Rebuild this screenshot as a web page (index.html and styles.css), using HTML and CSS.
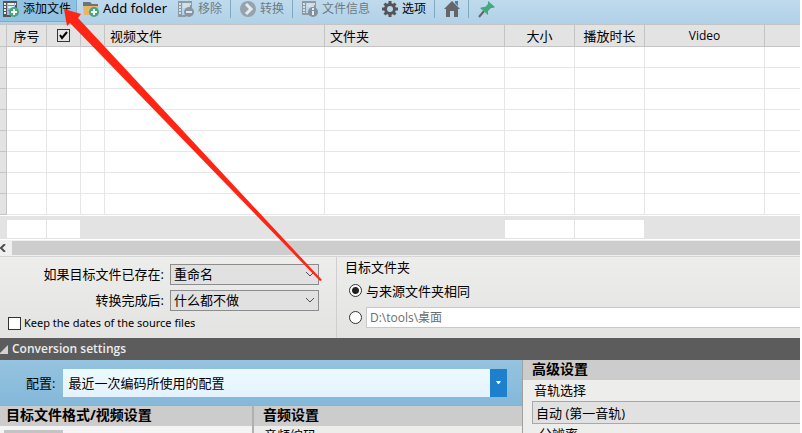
FILE: index.html
```html
<!DOCTYPE html>
<html lang="zh-CN">
<head>
    <meta charset="UTF-8">
    <meta name="viewport" content="width=device-width, initial-scale=1.0">
    <title>Video Converter</title>
    <link rel="stylesheet" href="styles.css">
</head>
<body>
    <div class="toolbar">
        <button class="tool active">
            <svg width="16" height="18" viewBox="0 0 16 18">
                <path fill="#555" d="M0 1h14v8h-2V3H4v12h4v2H0z"/>
                <path fill="#e6eef2" d="M1 3h2v2H1zM1 6h2v2H1zM1 9h2v2H1zM1 12h2v2H1zM12 3h1v2h-1zM5 3h6v5H5z"/>
                <path stroke="#7d8990" d="M5 5.500h6M5 10.500h3"/>
                <circle cx="11" cy="12" r="5" fill="#46a67c"/>
                <path stroke="#fff" stroke-width="2" d="M11 9v6M8 12h6"/>
            </svg>
            <span>添加文件</span>
        </button>
        <button class="tool folder">
            <svg width="16" height="18" viewBox="0 0 16 18">
                <path fill="#707478" d="M0 2h7l2 2h6v2H0z"/>
                <path fill="#e8b467" d="M0 6h15v9H1z"/>
                <circle cx="11" cy="12" r="5" fill="#46a67c"/>
                <path stroke="#fff" stroke-width="2" d="M11 9v6M8 12h6"/>
            </svg>
            <span class="latin">Add folder</span>
        </button>
        <button class="tool remove" disabled>
            <svg width="16" height="18" viewBox="0 0 16 18">
                <path fill="#8f9ba3" d="M0 1h14v8h-2V3H4v12h4v2H0z"/>
                <path fill="#d3e0e8" d="M1 3h2v2H1zM1 6h2v2H1zM1 9h2v2H1zM1 12h2v2H1zM12 3h1v2h-1zM5 3h6v5H5z"/>
                <circle cx="11" cy="12" r="5" fill="#8796a0"/>
                <path stroke="#dce6ec" stroke-width="2" d="M8 12h6"/>
            </svg>
            <span>移除</span>
        </button>
        <button class="tool split convert" disabled>
            <svg width="16" height="18" viewBox="0 0 16 18">
                <circle cx="8" cy="9" r="8" fill="#96a3ac"/>
                <path fill="none" stroke="#e3ebf0" stroke-width="3" d="M6 4l5 5-5 5"/>
            </svg>
            <span>转换</span>
        </button>
        <button class="tool split info" disabled>
            <svg width="16" height="18" viewBox="0 0 16 18">
                <path fill="#8f9ba3" d="M0 1h14v7h-2V3H4v10h3v2H0z"/>
                <path fill="#d3e0e8" d="M1 3h2v2H1zM1 6h2v2H1zM1 9h2v2H1zM1 12h2v1H1zM12 3h1v2h-1zM5 3h6v4H5z"/>
                <circle cx="11" cy="12" r="5" fill="#84919a"/>
                <path stroke="#e6eef2" stroke-width="2" d="M11 8v2M11 11v4"/>
            </svg>
            <span>文件信息</span>
        </button>
        <button class="tool options">
            <svg width="16" height="18" viewBox="0 0 16 18">
                <path stroke="#555" stroke-width="3" d="M8 1v16M0 9h16M2.500 3.500l11 11M13.500 3.500l-11 11"/>
                <circle cx="8" cy="9" r="6" fill="#555"/>
                <circle cx="8" cy="9" r="3" fill="#b8d5e9"/>
            </svg>
            <span>选项</span>
        </button>
        <button class="tool split home" aria-label="Home">
            <svg width="16" height="18" viewBox="0 0 16 18">
                <path fill="#3b83bd" d="M11 1h3v5l-3-3z"/>
                <path fill="#666" d="M8 1l8 8h-2v8h-4v-6H6v6H2V9H0z"/>
            </svg>
        </button>
        <button class="tool split pin" aria-label="Pin">
            <svg width="17" height="18" viewBox="0 0 17 18">
                <path stroke="#666" stroke-width="2" d="M6 11l-5 6"/>
                <path fill="#46a880" d="M10 1l7 6-2 1h-2l-3 3v4L2 8l3-1 2 0 3-3z"/>
            </svg>
        </button>
    </div>

    <table class="files">
        <colgroup>
            <col class="col-gutter"><col class="col-no"><col class="col-check"><col class="col-icon"><col class="col-file"><col class="col-folder"><col class="col-size"><col class="col-time"><col class="col-video"><col>
        </colgroup>
        <thead>
            <tr>
                <th></th>
                <th>序号</th>
                <th><input type="checkbox" class="check" aria-label="全选" checked></th>
                <th></th>
                <th class="left">视频文件</th>
                <th class="left">文件夹</th>
                <th>大小</th>
                <th>播放时长</th>
                <th class="latin">Video</th>
                <th></th>
            </tr>
        </thead>
        <tbody>
            <tr><td></td><td></td><td></td><td></td><td></td><td></td><td></td><td></td><td></td><td></td></tr>
            <tr><td></td><td></td><td></td><td></td><td></td><td></td><td></td><td></td><td></td><td></td></tr>
            <tr><td></td><td></td><td></td><td></td><td></td><td></td><td></td><td></td><td></td><td></td></tr>
            <tr><td></td><td></td><td></td><td></td><td></td><td></td><td></td><td></td><td></td><td></td></tr>
            <tr><td></td><td></td><td></td><td></td><td></td><td></td><td></td><td></td><td></td><td></td></tr>
            <tr><td></td><td></td><td></td><td></td><td></td><td></td><td></td><td></td><td></td><td></td></tr>
            <tr><td></td><td></td><td></td><td></td><td></td><td></td><td></td><td></td><td></td><td></td></tr>
            <tr><td></td><td></td><td></td><td></td><td></td><td></td><td></td><td></td><td></td><td></td></tr>
        </tbody>
        <tfoot>
            <tr class="spacer"><td colspan="10"></td></tr>
            <tr class="totals"><td></td><td class="cell"></td><td class="cell"></td><td colspan="3"></td><td class="cell"></td><td class="cell"></td><td colspan="2"></td></tr>
        </tfoot>
    </table>
    <div class="scrollbar">
        <button class="scroll-left" aria-label="Scroll left">
            <svg width="6" height="8" viewBox="0 0 6 8"><path fill="none" stroke="#505050" stroke-width="2" d="M5 0L1 4l4 4"/></svg>
        </button>
        <div class="thumb"></div>
    </div>

    <div class="output">
        <div class="rules">
            <div class="rule">
                <label for="exists">如果目标文件已存在:</label>
                <select id="exists"><option>重命名</option></select>
            </div>
            <div class="rule">
                <label for="after">转换完成后:</label>
                <select id="after"><option>什么都不做</option></select>
            </div>
            <label class="keep"><input type="checkbox" class="box">Keep the dates of the source files</label>
        </div>
        <div class="target">
            <div class="target-title">目标文件夹</div>
            <label class="choice"><input type="radio" name="target" class="radio" checked>与来源文件夹相同</label>
            <div class="choice">
                <input type="radio" name="target" class="radio" aria-label="自定义文件夹">
                <div class="path">
                    <input type="text" class="path-input" value="D:\tools\桌面" aria-label="目标文件夹">
                </div>
            </div>
        </div>
    </div>

    <button class="section-bar">
        <svg width="8" height="9" viewBox="0 0 8 9"><path fill="#d2d2d2" d="M8 0v9H0V8z"/></svg>
        Conversion settings
    </button>

    <div class="settings">
        <div class="main-settings">
            <div class="profile">
                <label for="profile">配置:</label>
                <div class="profile-box">
                    <select id="profile" class="profile-select"><option>最近一次编码所使用的配置</option></select>
                    <span class="drop"><svg width="5" height="3" viewBox="0 0 5 3"><path fill="#fff" d="M0 0h5L3 3H2z"/></svg></span>
                </div>
            </div>
            <div class="panels">
                <div class="panel format">
                    <h2>目标文件格式/视频设置</h2>
                    <div class="format-tab"></div>
                </div>
                <div class="panel audio">
                    <h2>音频设置</h2>
                    <div class="field-name">音频编码</div>
                </div>
            </div>
        </div>
        <div class="advanced">
            <h2>高级设置</h2>
            <label class="field-name" for="track">音轨选择</label>
            <select id="track" class="track"><option>自动 (第一音轨)</option></select>
            <div class="field-name resolution">分辨率</div>
        </div>
    </div>

    <svg class="arrow" width="262" height="277" viewBox="0 0 262 277">
        <path fill="#ff2514" d="M3 4L20 9l-3 4L261 275l-2 1L9 18l-3 3z"/>
    </svg>
</body>
</html>
```
FILE: styles.css
```css
* { box-sizing: border-box; }
body {
    margin: 0;
    padding-right: 2px;
    height: 100vh;
    overflow: hidden;
    position: relative;
    background: #fff;
    color: #000;
    font-family: "Open Sans", "Noto Sans CJK SC", sans-serif;
    font-size: 13px;
    line-height: 18px;
}
button, select, input {
    font: inherit;
    color: inherit;
    margin: 0;
    padding: 0;
    border: 0;
    border-radius: 0;
}
svg { flex: none; display: block; }

.toolbar {
    display: flex;
    height: 24px;
    background: linear-gradient(#bfdaec, #b1d1e8);
}
.tool {
    display: flex;
    align-items: flex-start;
    gap: 4px;
    height: 24px;
    background: none;
    font-size: 12px;
    line-height: 17px;
    white-space: nowrap;
}
.tool.active {
    width: 77px;
    height: 22px;
    padding-left: 3px;
    background: #91c2e1;
    border-right: 1px solid #75add2;
    border-bottom: 1px solid #75add2;
}
.tool:disabled { color: #6f7b83; }
.tool.folder { padding-left: 6px; }
.tool .latin { font-family: "Noto Sans", sans-serif; font-size: 13px; }
.remove { width: 52px; margin-left: 11px; }
.split::before {
    content: "";
    width: 1px;
    height: 18px;
    margin-right: 5px;
    background: #7fa9c0;
}
.split.convert { width: 62px; gap: 4px; }
.split.info { width: 90px; }
.options { width: 52px; }
.split.home { width: 34px; }

.files {
    width: 100%;
    table-layout: fixed;
    border-collapse: separate;
    border-spacing: 0;
}
.col-gutter { width: 7px; }
.col-no { width: 40px; }
.col-check { width: 34px; }
.col-icon { width: 24px; }
.col-file { width: 220px; }
.col-folder { width: 180px; }
.col-size, .col-time { width: 70px; }
.col-video { width: 120px; }
.files th {
    height: 23px;
    padding: 0;
    background: #e3e3e3;
    border: solid #c4c4c4;
    border-width: 1px 1px 1px 0;
    font-weight: normal;
    line-height: 20px;
    overflow: hidden;
}
.files th.left { text-align: left; padding-left: 5px; }
.files th.latin { font-size: 12px; }
.files td {
    height: 21px;
    padding: 0;
    border: solid #e6e6e6;
    border-width: 0 1px 1px 0;
}
.files td:first-child {
    background: #e3e3e3;
    border-color: #c4c4c4;
}
.files th:last-child, .files td:last-child { border-right: 0; }
.files .spacer td {
    height: 5px;
    background: #e3e3e3;
    border: 0;
    border-top: 1px solid #fff;
}
.files .totals td { height: 19px; background: #e3e3e3; border-color: #e3e3e3; }
.files .totals .cell { background: #fff; }
.check, .box {
    appearance: none;
    display: block;
    width: 13px;
    height: 13px;
    border: 1px solid #333;
    background: #fff;
}
.check {
    margin: 0 auto;
    background: #e3e3e3 url("data:image/svg+xml,%3Csvg xmlns='http://www.w3.org/2000/svg' width='9' height='9'%3E%3Cpath fill='none' stroke='%23000' stroke-width='2' d='M1 4l2 3 5-6'/%3E%3C/svg%3E") no-repeat center;
}

.scrollbar {
    display: flex;
    height: 18px;
    padding: 1px 0;
    background: #f0f0f0;
    border-top: 1px solid #fff;
    border-bottom: 1px solid #d6d6d6;
}
.scroll-left {
    display: flex;
    align-items: center;
    width: 12px;
    background: none;
}
.thumb { flex: 1; background: #cdcdcd; }

.output {
    display: flex;
    height: 81px;
    background: linear-gradient(#ededeb, #e3e3e2);
}
.rules {
    width: 337px;
    padding: 6px 17px 0 8px;
    border-right: 1px solid #cfcfcf;
}
.rule {
    display: flex;
    justify-content: flex-end;
    align-items: center;
    gap: 6px;
    height: 22px;
    margin-bottom: 4px;
}
.rule select {
    appearance: none;
    width: 149px;
    height: 21px;
    padding-left: 3px;
    border: 1px solid #8c8c8c;
    background: #e1e1e1 url("data:image/svg+xml,%3Csvg xmlns='http://www.w3.org/2000/svg' width='8' height='5'%3E%3Cpath fill='none' stroke='%23505050' d='M0 0l4 4 4-4'/%3E%3C/svg%3E") no-repeat right 4px center;
}
.keep {
    display: flex;
    align-items: center;
    gap: 3px;
    height: 16px;
    font-size: 11px;
    font-family: "Noto Sans", sans-serif;
}
.target {
    flex: 1;
    padding: 1px 0 0 8px;
}
.target-title { height: 20px; }
.choice {
    display: flex;
    align-items: center;
    gap: 4px;
    height: 25px;
}
.choice + .choice { height: 28px; }
.radio {
    appearance: none;
    flex: none;
    width: 13px;
    height: 13px;
    margin-left: 4px;
    border: 1px solid #333;
    border-radius: 50%;
    background: #fff;
}
.radio:checked { background: radial-gradient(circle, #222 3px, #fff 4px); }
.path { flex: 1; }
.path-input {
    display: block;
    width: 100%;
    height: 21px;
    padding-left: 3px;
    border: 1px solid #c8c8c8;
    border-right: 0;
    background: #fff;
    color: #6d6d6d;
    font-size: 12px;
}

.section-bar {
    display: flex;
    align-items: center;
    gap: 4px;
    width: 100%;
    height: 22px;
    background: #5c5c5c;
    color: #ececec;
    font-size: 12px;
    font-weight: 600;
}

.settings { display: flex; }
.main-settings { flex: 1; }
.profile {
    display: flex;
    align-items: center;
    gap: 8px;
    height: 45px;
    padding: 0 15px 0 26px;
    background: linear-gradient(#95c3e0, #84b8d9);
}
.profile-box {
    display: flex;
    flex: 1;
    height: 28px;
}
.profile-select {
    appearance: none;
    flex: 1;
    padding-left: 5px;
    background: linear-gradient(#ecfaff, #e4f2ff);
}
.drop {
    display: flex;
    align-items: center;
    justify-content: center;
    width: 17px;
    background: #1e80cd;
}
h2 {
    height: 21px;
    margin: 0;
    background: #cccccc;
    font-size: 14px;
    font-weight: bold;
    line-height: 18px;
}
.panels { display: flex; }
.panel { height: 28px; background: #ededeb; }
.panel h2 { border-top: 1px solid #aaa; }
.format {
    width: 254px;
    border-right: 2px solid #b0b0b0;
    background: #f4f4f4;
}
.format h2 { padding-left: 6px; }
.format-tab {
    width: 59px;
    height: 3px;
    margin: 4px 0 0 4px;
    background: #c4c4c4;
}
.audio { flex: 1; }
.audio h2 { padding-left: 9px; }
.audio .field-name { padding-left: 10px; }
.advanced {
    width: 278px;
    border-left: 1px solid #a0a0a0;
    background: #ededeb;
}
.advanced h2 { height: 20px; padding-left: 9px; }
.advanced .field-name {
    display: block;
    height: 21px;
    padding-left: 11px;
    line-height: 21px;
}
.track {
    appearance: none;
    display: block;
    width: calc(100% - 9px);
    height: 23px;
    margin-left: 9px;
    padding-left: 3px;
    border: 1px solid #a8a8a8;
    border-right: 0;
    background: #e1e1e1;
}
.advanced .resolution { padding-left: 16px; }

.arrow {
    position: absolute;
    left: 61px;
    top: 5px;
    pointer-events: none;
}
```
